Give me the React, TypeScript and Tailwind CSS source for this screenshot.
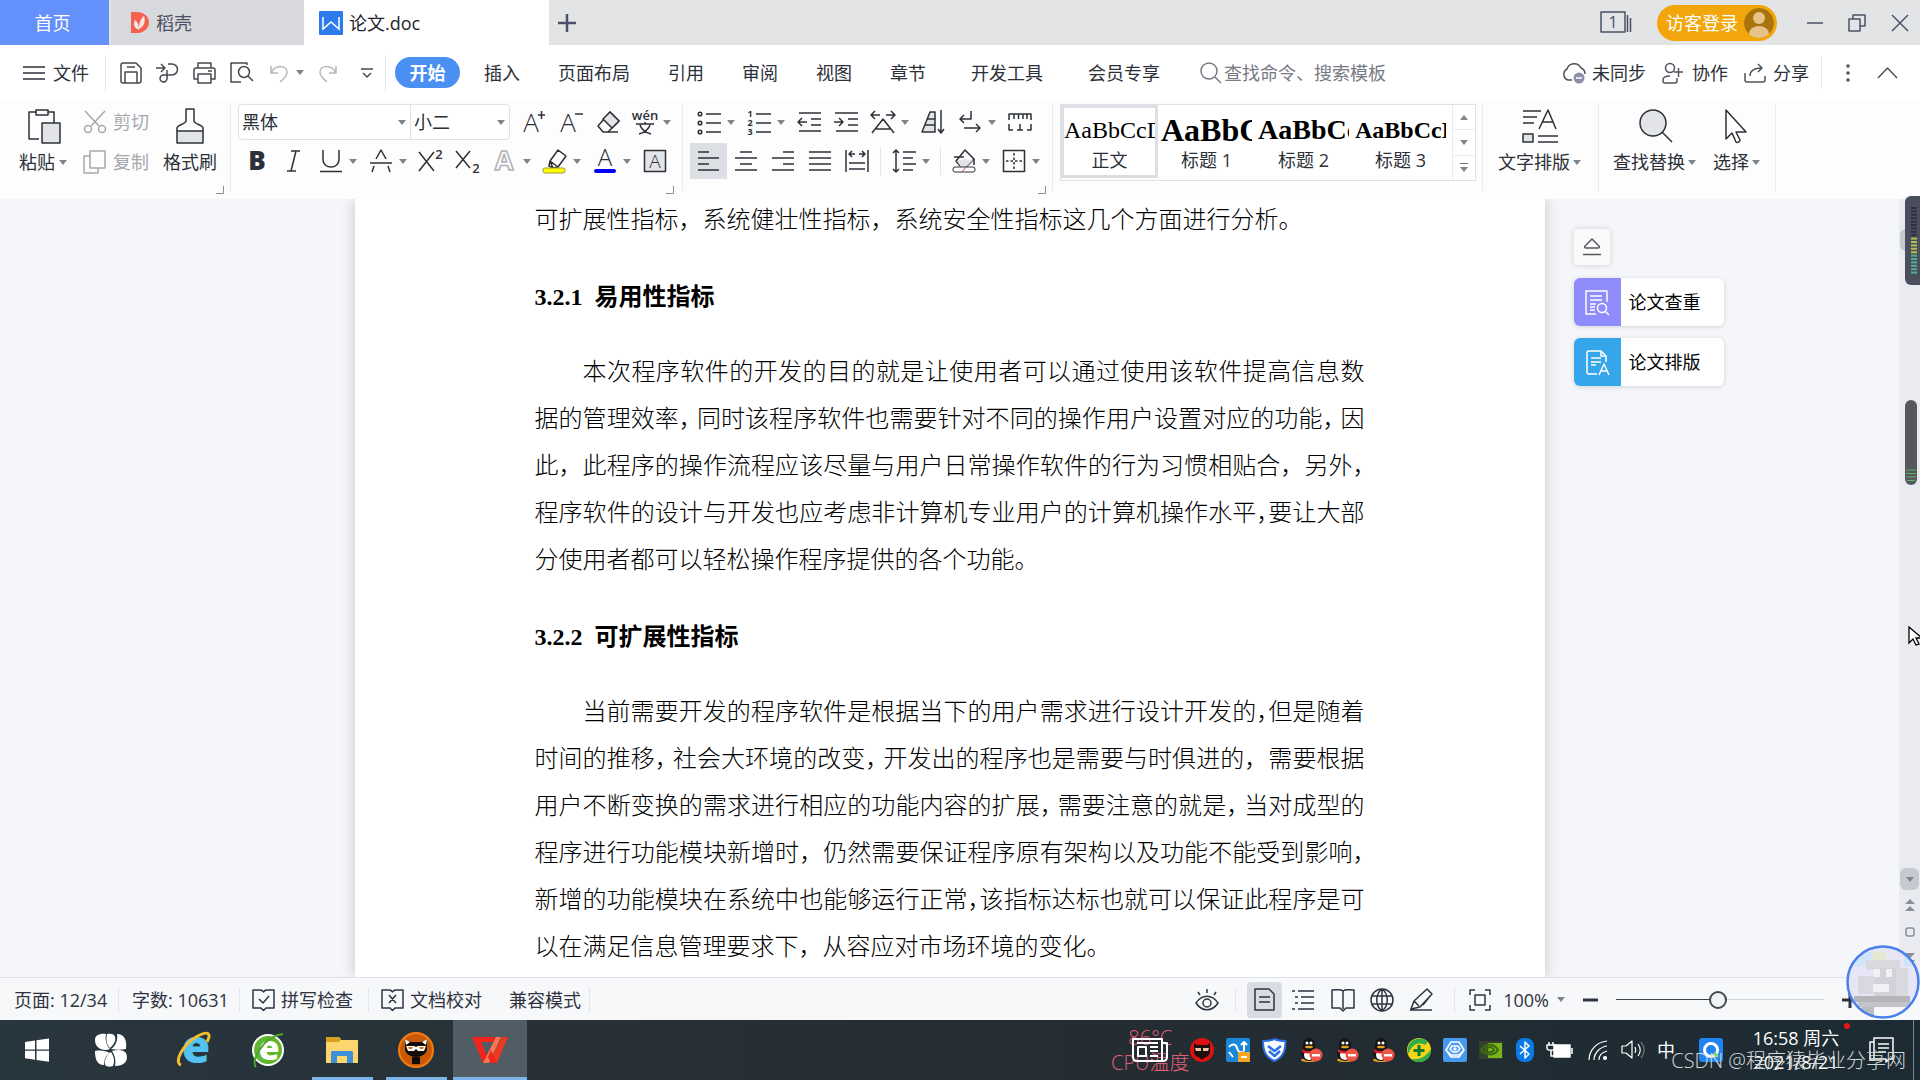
import type { ReactNode } from 'react'
import clsx from 'clsx'

type IconProps = {
  w?: number
  h?: number
  sw?: number
  className?: string
  children: ReactNode
}

function Icon({ w = 24, h = 24, sw = 1.5, className, children }: IconProps) {
  return (
    <svg
      width={w}
      height={h}
      viewBox={`0 0 ${w} ${h}`}
      fill="none"
      stroke="currentColor"
      strokeWidth={sw}
      strokeLinejoin="round"
      aria-hidden="true"
      className={clsx('shrink-0 overflow-visible', className)}
    >
      {children}
    </svg>
  )
}

type GlyphProps = {
  x: number
  y: number
  size: number
  weight?: number
  fill?: string
  stroke?: string
  children: ReactNode
}

// Letters inside toolbar icons
function Glyph({
  x,
  y,
  size,
  weight = 400,
  fill = 'currentColor',
  stroke = 'none',
  children,
}: GlyphProps) {
  return (
    <text
      x={x}
      y={y}
      fontSize={size}
      fontWeight={weight}
      textAnchor="middle"
      fill={fill}
      stroke={stroke}
    >
      {children}
    </text>
  )
}

function Arrow({ className }: { className?: string }) {
  return (
    <svg
      width="8"
      height="5"
      viewBox="0 0 8 5"
      className={clsx('shrink-0 fill-[#808389]', className)}
      aria-hidden="true"
    >
      <path d="M0 0h8L4 5z" />
    </svg>
  )
}

type ToolProps = {
  label: string
  menu?: boolean
  active?: boolean
  children: ReactNode
}

function Tool({ label, menu, active, children }: ToolProps) {
  return (
    <button type="button" aria-label={label} className="flex items-center">
      <span
        className={clsx(
          'flex h-9 w-[37px] items-center justify-center',
          active && 'bg-[#dcdfe3]'
        )}
      >
        {children}
      </span>
      {menu && <Arrow className="mr-[5px]" />}
    </button>
  )
}

function Divider({ className }: { className?: string }) {
  return <span className={clsx('w-px shrink-0 bg-[#e3e5e8]', className)} />
}

function Launcher() {
  return (
    <Icon w={8} h={8} sw={1} className="text-[#8b8e94]">
      <path d="M7.5 0v7.5H0" />
    </Icon>
  )
}

function TitleBar() {
  return (
    <header className="flex h-[45px] items-stretch bg-[#e2e4e6] text-lg">
      <button type="button" className="w-[109px] bg-[#6490fb] pr-1 text-white">
        首页
      </button>
      <button
        type="button"
        className="ml-[2px] flex w-[193px] items-center gap-[7px] bg-[#d7d9dd] pl-5 text-[#4d5163]"
      >
        <Icon w={18} h={21} sw={0}>
          <path d="M0 0h6a12 10.500 0 0 1 0 21H0z" fill="#f4614e" />
          <path
            d="M8 18C1 15 3 10 4 8c3 2 4 5 4 10zM8 17c0-7 2-11 5-13 2 5 0 11-5 13z"
            fill="#fbe3df"
          />
        </Icon>
        稻壳
      </button>
      <button
        type="button"
        className="flex w-[245px] items-center gap-[6px] bg-white pl-[15px] text-[#22252b]"
      >
        <Icon w={24} h={24}>
          <rect width="24" height="24" rx="1" fill="#2d7bea" stroke="none" />
          <path d="M4 6v12l8-7 8 7V6" stroke="#fff" strokeLinejoin="miter" />
        </Icon>
        论文.doc
      </button>
      <button
        type="button"
        aria-label="新建标签"
        className="flex w-9 items-center justify-center text-[#4b5068]"
      >
        <Icon w={18} h={18} sw={2.5}>
          <path d="M9 0v18M0 9h18" />
        </Icon>
      </button>
      <div className="ml-auto flex items-center text-[#4b5068]">
        <Icon w={32} h={24}>
          <path d="M1 1h24v20H1z" />
          <path d="M27.500 4v17M30.500 7v14" />
          <Glyph x={13} y={17} size={16}>
            1
          </Glyph>
        </Icon>
        <Divider className="mx-3 h-7 bg-[#cdcfd3]" />
        <button
          type="button"
          className="flex h-9 w-[120px] items-center justify-between rounded-full bg-[#f3a60b] pr-[3px] pl-[9px] text-white"
        >
          访客登录
          <Icon w={30} h={30} sw={0}>
            <clipPath id="face">
              <circle cx="15" cy="15" r="15" />
            </clipPath>
            <g clipPath="url(#face)">
              <circle cx="15" cy="15" r="15" fill="#a8740b" />
              <circle cx="15" cy="10" r="6" fill="#e7c38a" />
              <ellipse cx="15" cy="26" rx="10" ry="8" fill="#e7c38a" />
            </g>
          </Icon>
        </button>
        <Divider className="mx-3 h-7 bg-[#cdcfd3]" />
        <div className="flex items-center gap-6 pr-[11px] pl-[5px]">
          <button type="button" aria-label="最小化">
            <Icon w={16} h={18}>
              <path d="M0 9h16" />
            </Icon>
          </button>
          <button type="button" aria-label="还原">
            <Icon w={20} h={18}>
              <path d="M2 5h11v12H2zM6 5V1h12v11h-5" />
            </Icon>
          </button>
          <button type="button" aria-label="关闭">
            <Icon w={18} h={18}>
              <path d="m1 1 16 16M17 1 1 17" />
            </Icon>
          </button>
        </div>
      </div>
    </header>
  )
}

function QuickAccess() {
  return (
    <div className="flex items-center text-[#44484f]">
      <button type="button" aria-label="保存" className="ml-[14px]">
        <Icon w={22} h={22}>
          <path d="M3 1h13l5 5v13a2 2 0 0 1-2 2H3a2 2 0 0 1-2-2V3a2 2 0 0 1 2-2z" />
          <path d="M5 21V10h12v11M7 5h8" />
        </Icon>
      </button>
      <button type="button" aria-label="输出为PDF" className="ml-[14px]">
        <Icon w={23} h={22}>
          <path d="M0 6h9M5 2l4 4-4 4M12 2h4a5.500 5.500 0 0 1 0 11H8a3.500 3.500 0 1 0 3 4V8" />
        </Icon>
      </button>
      <button type="button" aria-label="打印" className="ml-[14px]">
        <Icon w={23} h={22}>
          <path d="M5 6V1h13v5M5 17H1V8a2 2 0 0 1 2-2h17a2 2 0 0 1 2 2v9h-4" />
          <path d="M5 12h13v9H5zM15 9h4" />
        </Icon>
      </button>
      <button type="button" aria-label="打印预览" className="ml-[14px]">
        <Icon w={24} h={22}>
          <path d="M17 3V1H1v19h10" />
          <circle cx="14" cy="10" r="5.500" />
          <path d="m18 14 5 5" />
        </Icon>
      </button>
      <button
        type="button"
        aria-label="撤销"
        className="ml-4 flex items-center gap-2 text-[#b5b8bd]"
      >
        <Icon w={18} h={20}>
          <path d="M1 3v7h7M1 10c4-9 16-8 16-1 0 5-4 7-7 10" />
        </Icon>
        <Arrow />
      </button>
      <button type="button" aria-label="恢复" className="ml-[15px] text-[#b5b8bd]">
        <Icon w={18} h={20}>
          <path d="M17 3v7h-7M17 10C13 1 1 2 1 9c0 5 4 7 7 10" />
        </Icon>
      </button>
      <button type="button" aria-label="自定义快速访问" className="mr-3 ml-6">
        <Icon w={12} h={10}>
          <path d="M0 1h12M2 5l4 4 4-4" />
        </Icon>
      </button>
    </div>
  )
}

const menuTabs = ['插入', '页面布局', '引用', '审阅', '视图', '章节']
const extraTabs = ['开发工具', '会员专享']

function MenuBar() {
  return (
    <nav className="flex h-[55px] items-center bg-white pl-[23px] text-lg text-[#2c3038]">
      <button type="button" className="flex items-center gap-2">
        <Icon w={22} h={14}>
          <path d="M0 1h22M0 7h22M0 13h22" />
        </Icon>
        文件
      </button>
      <Divider className="ml-4 h-9" />
      <QuickAccess />
      <Divider className="h-9" />
      <button
        type="button"
        className="ml-[9px] h-[31px] w-[65px] rounded-full bg-[#4a90f2] font-bold text-white"
      >
        开始
      </button>
      <div className="ml-6 flex gap-[38px]">
        {menuTabs.map((tab) => (
          <button key={tab} type="button">
            {tab}
          </button>
        ))}
      </div>
      {extraTabs.map((tab) => (
        <button key={tab} type="button" className="ml-[45px]">
          {tab}
        </button>
      ))}
      <label className="ml-10 flex items-center gap-[2px] text-[#767a82]">
        <Icon w={22} h={22}>
          <circle cx="9" cy="9" r="8" />
          <path d="m15 15 6 6" />
        </Icon>
        <input
          type="text"
          aria-label="查找"
          placeholder="查找命令、搜索模板"
          className="w-44 bg-transparent outline-none placeholder:text-[#767a82]"
        />
      </label>
      <div className="ml-auto flex items-center">
        <button type="button" className="flex items-center gap-[6px]">
          <Icon w={25} h={22} className="text-[#4f535c]">
            <path d="M11 18H7a6 6 0 0 1-1-11 7.500 7.500 0 0 1 14-1c3 1 4 3 4 6" />
            <circle cx="18" cy="16" r="5.500" fill="#8b90a8" stroke="none" />
            <path d="M15 16h6" stroke="#fff" />
          </Icon>
          未同步
        </button>
        <button type="button" className="ml-4 flex items-center gap-[9px]">
          <Icon w={21} h={22} className="text-[#4f535c]">
            <circle cx="8" cy="6" r="4.500" />
            <path d="M15 16v3a2 2 0 0 1-2 2H3a2 2 0 0 1-2-2v-1c0-3 3-4 7-4M12 10h9M16.500 6v9" />
          </Icon>
          协作
        </button>
        <button type="button" className="ml-4 flex items-center gap-[7px]">
          <Icon w={22} h={20} className="text-[#4f535c]">
            <path d="M1 10v7a2 2 0 0 0 2 2h16a2 2 0 0 0 2-2v-4M6 13c0-6 4-8 12-8M14 1l4 4-4 4" />
          </Icon>
          分享
        </button>
        <Divider className="ml-3 h-8" />
        <button type="button" aria-label="更多" className="ml-6 text-[#4f535c]">
          <Icon w={4} h={18} sw={0}>
            <g fill="currentColor">
              <circle cx="2" cy="2" r="1.800" />
              <circle cx="2" cy="9" r="1.800" />
              <circle cx="2" cy="16" r="1.800" />
            </g>
          </Icon>
        </button>
        <button
          type="button"
          aria-label="折叠功能区"
          className="mr-[22px] ml-[27px] text-[#4f535c]"
        >
          <Icon w={21} h={12}>
            <path d="m1 11 9.500-10L20 11" />
          </Icon>
        </button>
      </div>
    </nav>
  )
}

function ClipboardGroup() {
  return (
    <div className="flex w-[230px] shrink-0 items-start pl-[19px]">
      <button type="button" className="flex w-[49px] flex-col pt-1">
        <Icon w={34} h={38} className="ml-2">
          <path d="M12 31H2V4h7M21 4h6v11" />
          <path d="M9 2h12v5H9z" />
          <path d="M15 15h18v20H15z" fill="#e2e4e8" />
        </Icon>
        <span className="mt-1 flex items-center gap-1 whitespace-nowrap">
          粘贴
          <Arrow />
        </span>
      </button>
      <div className="ml-[15px] flex flex-col text-[#a5a8ad]">
        <button type="button" className="flex h-9 items-center gap-[6px]">
          <Icon w={24} h={24}>
            <circle cx="5" cy="19" r="3.500" />
            <circle cx="19" cy="19" r="3.500" />
            <path d="m2 1 14 15M22 1 8 16" />
          </Icon>
          剪切
        </button>
        <button type="button" className="mt-1 flex h-9 items-center gap-[6px]">
          <Icon w={24} h={24}>
            <path d="M7 1h15v17H7zM7 6H1v17h14v-5" />
          </Icon>
          复制
        </button>
      </div>
      <button type="button" className="ml-[14px] flex flex-col items-center pt-1">
        <Icon w={30} h={38}>
          <path d="M2 23h26v12H2z" fill="#e2e4e8" />
          <path d="M2 23v-3c0-3 9-4 9-7V1h8v12c0 3 9 4 9 7v3" />
        </Icon>
        <span className="mt-1">格式刷</span>
      </button>
      <span className="mt-[82px] -ml-px">
        <Launcher />
      </span>
    </div>
  )
}

function FontGroup() {
  return (
    <div className="flex w-[452px] shrink-0 flex-col gap-[3px] border-l border-[#e8eaec] pl-[7px]">
      <div className="flex items-center">
        <label className="flex h-9 w-[173px] items-center rounded-l border border-[#dfe1e4] bg-white">
          <select
            aria-label="字体"
            className="flex-1 appearance-none bg-transparent pl-[3px] outline-none"
          >
            <option>黑体</option>
          </select>
          <Arrow className="mr-1" />
        </label>
        <label className="-ml-px flex h-9 w-[100px] items-center rounded-r border border-[#dfe1e4] bg-white">
          <select
            aria-label="字号"
            className="flex-1 appearance-none bg-transparent pl-[3px] outline-none"
          >
            <option>小二</option>
          </select>
          <Arrow className="mr-1" />
        </label>
        <div className="ml-[5px] flex">
          <Tool label="增大字号">
            <Icon>
              <Glyph x={9} y={22} size={26} weight={300}>
                A
              </Glyph>
              <path d="M16 5h7M19.500 1v8" />
            </Icon>
          </Tool>
          <Tool label="减小字号">
            <Icon>
              <Glyph x={9} y={22} size={26} weight={300}>
                A
              </Glyph>
              <path d="M16 4h8" />
            </Icon>
          </Tool>
          <Tool label="清除格式">
            <Icon>
              <path d="M14 2 23 11 12 22H7l-5-6z" />
              <path d="M14 2 23 11l-7 7L7 9z" fill="#e2e4e8" />
              <path d="M12 22h10" />
            </Icon>
          </Tool>
          <Tool label="拼音指南" menu>
            <Icon>
              <Glyph x={12} y={10} size={13} weight={600}>
                wén
              </Glyph>
              <path d="M3 14h18M12 12v2M7 15c1 4 6 8 11 9M17 15c-1 4-6 8-11 9" />
            </Icon>
          </Tool>
        </div>
      </div>
      <div className="flex items-center">
        <Tool label="加粗">
          <Icon>
            <Glyph x={12} y={21} size={26} weight={800}>
              B
            </Glyph>
          </Icon>
        </Tool>
        <Tool label="倾斜">
          <Icon>
            <path d="M9 2h9M5 22h9M14 2 9 22" />
          </Icon>
        </Tool>
        <Tool label="下划线" menu>
          <Icon>
            <path d="M4 1v10a8 7 0 0 0 16 0V1M1 22.500h22" />
          </Icon>
        </Tool>
        <Tool label="删除线" menu>
          <Icon>
            <path d="M7 10l5-9 5 9M1 14h22M5 17l-2 6M19 17l2 6" />
          </Icon>
        </Tool>
        <Tool label="上标">
          <Icon w={26}>
            <path d="m1 3 15 19M16 3 1 22" />
            <Glyph x={21} y={10} size={13} weight={600}>
              2
            </Glyph>
          </Icon>
        </Tool>
        <Tool label="下标">
          <Icon w={26}>
            <path d="m1 2 14 17M15 2 1 19" />
            <Glyph x={21} y={24} size={13} weight={600}>
              2
            </Glyph>
          </Icon>
        </Tool>
        <Tool label="文字效果" menu>
          <Icon>
            <Glyph x={11} y={21} size={27} weight={700} fill="none" stroke="#aeb1b6">
              A
            </Glyph>
          </Icon>
        </Tool>
        <Tool label="突出显示" menu>
          <Icon w={26} h={26}>
            <path d="m8 13 8-11 8 6-8 11-5 1zM8 13l-1 5 4 2M8 13l8 6" />
            <rect x="1" y="20" width="22" height="5" rx="2" fill="#ff0" stroke="#9a9a3a" strokeWidth="1" />
          </Icon>
        </Tool>
        <Tool label="字体颜色" menu>
          <Icon h={26}>
            <Glyph x={12} y={18} size={24} weight={300}>
              A
            </Glyph>
            <rect x="1" y="21" width="22" height="4" rx="2" fill="#00f" stroke="none" />
          </Icon>
        </Tool>
        <Tool label="字符底纹">
          <Icon>
            <rect x="1.500" y="1.500" width="21" height="21" fill="#e2e4e8" />
            <Glyph x={12} y={19} size={19} weight={300}>
              A
            </Glyph>
          </Icon>
        </Tool>
      </div>
      <span className="mt-1 mr-2 self-end">
        <Launcher />
      </span>
    </div>
  )
}

const alignments = [
  { label: '左对齐', d: 'M1 3h11M1 9h21M1 15h11M1 21h21' },
  { label: '居中对齐', d: 'M6 3h12M1 9h22M6 15h12M1 21h22' },
  { label: '右对齐', d: 'M12 3h11M1 9h22M12 15h11M1 21h22' },
  { label: '两端对齐', d: 'M1 3h22M1 9h22M1 15h22M1 21h22' },
  {
    label: '分散对齐',
    d: 'M1 1v22M23 1v22M4 5h6M14 5h6M7 2 4 5l3 3M17 2l3 3-3 3M4 14h16M4 20h16',
  },
]

function ParagraphGroup() {
  return (
    <div className="flex w-[370px] shrink-0 flex-col gap-[3px] border-l border-[#e8eaec] pl-[7px]">
      <div className="flex">
        <Tool label="项目符号" menu>
          <Icon>
            <path d="M9 4h15M9 13h15M9 22h15" />
            <circle cx="3" cy="4" r="1.800" />
            <circle cx="3" cy="13" r="1.800" />
            <circle cx="3" cy="22" r="1.800" />
          </Icon>
        </Tool>
        <Tool label="编号" menu>
          <Icon>
            <path d="M9 4h15M9 13h15M9 22h15" />
            <Glyph x={3} y={7} size={9} weight={700}>
              1
            </Glyph>
            <Glyph x={3} y={16} size={9} weight={700}>
              2
            </Glyph>
            <Glyph x={3} y={25} size={9} weight={700}>
              3
            </Glyph>
          </Icon>
        </Tool>
        <Tool label="减少缩进量">
          <Icon>
            <path d="M2 3h22M14 9h10M14 15h10M2 21h22M1 12h9M5 8l-4 4 4 4" />
          </Icon>
        </Tool>
        <Tool label="增加缩进量">
          <Icon>
            <path d="M1 3h23M14 9h10M14 15h10M2 21h22M0 12h9M5 8l4 4-4 4" />
          </Icon>
        </Tool>
        <Tool label="中文版式" menu>
          <Icon>
            <path d="M0 5h9M15 5h9M4 1 0 5l4 4M20 1l4 4-4 4M1 23 12 9l11 14M5 19h14" />
          </Icon>
        </Tool>
        <Tool label="排序">
          <Icon>
            <path d="M1 22 9 2h5v20zM6 9h8M4 15h10" fill="#e2e4e8" />
            <path d="M20 0v23M17 19l3 4 3-4" />
          </Icon>
        </Tool>
        <Tool label="显示段落标记" menu>
          <Icon>
            <path d="M13 1v8H2M6 5 2 9l4 4M6 18h16M18 14l4 4-4 4" />
          </Icon>
        </Tool>
        <Tool label="制表位">
          <Icon>
            <path d="M1 10V4h22v6M6 4v5M10.500 4v5M15 4v5M19 4v5M1 14v6h4M9 20h6M12 14v6M19 20h4v-6" />
          </Icon>
        </Tool>
      </div>
      <div className="flex items-center">
        {alignments.map(({ label, d }, i) => (
          <Tool key={label} label={label} active={i === 0}>
            <Icon>
              <path d={d} />
            </Icon>
          </Tool>
        ))}
        <Divider className="mr-1 ml-[5px] h-7" />
        <Tool label="行距" menu>
          <Icon>
            <path d="M4 1v22M1 4l3-3 3 3M1 20l3 3 3-3M11 3h13M11 9h10M11 15h13M11 21h10" />
          </Icon>
        </Tool>
        <Divider className="mr-1 ml-[5px] h-7" />
        <Tool label="底纹颜色" menu>
          <Icon>
            <path d="m13 1 9 9-8 8H9L4 12z" />
            <path d="m5 12 8-2 8 1-7 7H9z" fill="#e2e4e8" stroke="none" />
            <path d="M2 8h10M22 10v6" />
            <rect x="1" y="18" width="22" height="5" rx="2" fill="#fff" strokeWidth="1" />
            <path d="m10 23 4-5" stroke="#d44" strokeWidth="1" />
          </Icon>
        </Tool>
        <Tool label="边框" menu>
          <Icon>
            <rect x="1.500" y="1.500" width="21" height="21" />
            <path d="M4 12h16M12 4v16" strokeDasharray="2.500 2" />
          </Icon>
        </Tool>
      </div>
      <span className="mt-1 mr-[6px] self-end">
        <Launcher />
      </span>
    </div>
  )
}

const styles = [
  { name: '正文', sample: 'text-[24px]' },
  { name: '标题 1', sample: 'text-[32px] font-bold' },
  { name: '标题 2', sample: 'text-[28px] font-bold' },
  { name: '标题 3', sample: 'text-[24px] font-bold' },
]

function StyleGallery() {
  return (
    <div className="flex w-[430px] shrink-0 items-start border-l border-[#e8eaec] pl-[7px]">
      <div className="flex h-[77px] w-[416px] border border-[#dfe1e4] bg-white">
        {styles.map(({ name, sample }, i) => (
          <button
            key={name}
            type="button"
            className={clsx(
              'flex h-[73px] w-[97px] flex-col items-center border-[3px] pt-1 text-[#2c3038]',
              i === 0 ? 'border-[#dcdfe3]' : 'border-transparent'
            )}
          >
            <span
              className={clsx(
                "h-9 w-[91px] overflow-hidden text-left font-['Liberation_Serif',serif] leading-9 whitespace-nowrap text-black",
                sample
              )}
            >
              AaBbCcDd
            </span>
            <span className="leading-6">{name}</span>
          </button>
        ))}
        <div className="ml-auto flex w-[23px] flex-col divide-y divide-[#e8eaec] border-l border-[#e8eaec]">
          <button type="button" aria-label="上一行" className="flex flex-1 items-center justify-center">
            <Arrow className="rotate-180" />
          </button>
          <button type="button" aria-label="下一行" className="flex flex-1 items-center justify-center">
            <Arrow />
          </button>
          <button
            type="button"
            aria-label="更多样式"
            className="flex flex-1 flex-col items-center justify-center gap-[3px]"
          >
            <span className="h-px w-2 bg-[#6d7077]" />
            <Arrow />
          </button>
        </div>
      </div>
    </div>
  )
}

type BigToolProps = { label: string; children: ReactNode }

function BigTool({ label, children }: BigToolProps) {
  return (
    <button type="button" className="flex flex-col items-center pt-1">
      <span className="flex h-[38px]">{children}</span>
      <span className="mt-1 flex items-center gap-[3px] whitespace-nowrap">
        {label}
        <Arrow />
      </span>
    </button>
  )
}

function Ribbon() {
  return (
    <section className="flex h-[99px] bg-[#fdfdfd] pt-1 pb-2 text-lg leading-6 text-[#2c3038] shadow-[0_1px_2px_rgba(0,0,0,0.12)]">
      <ClipboardGroup />
      <FontGroup />
      <ParagraphGroup />
      <StyleGallery />
      <div className="flex w-[116px] shrink-0 items-start border-l border-[#e8eaec] pl-[15px]">
        <BigTool label="文字排版">
          <Icon w={36} h={36}>
            <path d="M1 3h18M1 9h14M1 15h11M16 28h20M16 34h20" />
            <path d="M1 26h10v8H1z" fill="#e2e4e8" />
            <path d="M17 21 26 2l8 19M20 14h11" />
          </Icon>
        </BigTool>
      </div>
      <div className="flex w-[178px] shrink-0 items-start gap-[17px] border-r border-l border-[#e8eaec] pl-[14px]">
        <BigTool label="查找替换">
          <Icon w={36} h={36}>
            <circle cx="16" cy="15" r="13" fill="#e2e4e8" />
            <path d="m25 24 10 10" />
          </Icon>
        </BigTool>
        <BigTool label="选择">
          <Icon w={26} h={36}>
            <path d="M2 2v29l6-6 4 9c1 1 4 0 4-2l-4-8h10z" fill="#fff" />
          </Icon>
        </BigTool>
      </div>
    </section>
  )
}

// Comma trimmed by the word processor to keep a line justified
function C({ tight }: { tight?: boolean }) {
  return (
    <span
      className={clsx(
        'inline-block [font-feature-settings:"halt"]',
        tight ? 'w-3' : 'w-[18px]'
      )}
    >
      ，
    </span>
  )
}

type LineProps = { indent?: boolean; last?: boolean; children: ReactNode }

function Line({ indent, last, children }: LineProps) {
  return (
    <span
      className={clsx(
        'block h-[47px] whitespace-nowrap',
        indent && 'pl-12',
        !last && '[text-align-last:justify]'
      )}
    >
      {children}
    </span>
  )
}

function Page() {
  return (
    <article className="w-full max-w-[1190px] shrink-0 bg-white px-[180px] font-['Liberation_Serif','Noto_Sans_CJK_SC',serif] text-2xl leading-[47px] font-light text-black shadow-[0_0_14px_rgba(0,0,0,0.2)]">
      <p className="leading-[42px]">
        可扩展性指标，系统健壮性指标，系统安全性指标这几个方面进行分析。
      </p>
      <h2 className="mt-[33px] font-bold">3.2.1&ensp;易用性指标</h2>
      <p className="mt-7">
        <Line indent>本次程序软件的开发的目的就是让使用者可以通过使用该软件提高信息数</Line>
        <Line>
          据的管理效率
          <C />
          同时该程序软件也需要针对不同的操作用户设置对应的功能
          <C />因
        </Line>
        <Line>
          此，此程序的操作流程应该尽量与用户日常操作软件的行为习惯相贴合，另外
          <C tight />
        </Line>
        <Line>
          程序软件的设计与开发也应考虑非计算机专业用户的计算机操作水平
          <C tight />
          要让大部
        </Line>
        <Line last>分使用者都可以轻松操作程序提供的各个功能。</Line>
      </p>
      <h2 className="mt-[30px] font-bold">3.2.2&ensp;可扩展性指标</h2>
      <p className="mt-7">
        <Line indent>
          当前需要开发的程序软件是根据当下的用户需求进行设计开发的
          <C tight />
          但是随着
        </Line>
        <Line>
          时间的推移
          <C />
          社会大环境的改变
          <C />
          开发出的程序也是需要与时俱进的，需要根据
        </Line>
        <Line>
          用户不断变换的需求进行相应的功能内容的扩展
          <C />
          需要注意的就是
          <C />
          当对成型的
        </Line>
        <Line>
          程序进行功能模块新增时，仍然需要保证程序原有架构以及功能不能受到影响
          <C tight />
        </Line>
        <Line>
          新增的功能模块在系统中也能够运行正常
          <C tight />
          该指标达标也就可以保证此程序是可
        </Line>
        <Line last>以在满足信息管理要求下，从容应对市场环境的变化。</Line>
      </p>
    </article>
  )
}

function SideTools() {
  return (
    <aside className="min-w-0 flex-1 text-lg text-black">
      <div className="flex flex-col items-start pt-[30px] pl-[29px]">
        <button
          type="button"
          aria-label="收起"
          className="flex size-9 items-center justify-center rounded-sm bg-[#fafafa] text-[#55585e] shadow-[0_0_6px_rgba(0,0,0,0.15)]"
        >
          <Icon w={18} h={18}>
            <path d="m9 1 7 7c1 1 0 2-1 2H3c-1 0-2-1-1-2zM0 16.500h18" />
          </Icon>
        </button>
        <button
          type="button"
          className="mt-[13px] flex h-12 w-[150px] items-center overflow-hidden rounded-md bg-white shadow-[0_1px_5px_rgba(0,0,0,0.14)]"
        >
          <span className="flex h-full w-[47px] items-center justify-center bg-[#8e8bfb] text-white">
            <Icon w={25} h={25}>
              <path d="M11 24H1V1h21v11M5 6h12M5 10h12M5 14h6M5 17h5M5 20h5" />
              <circle cx="17" cy="18" r="4.500" />
              <path d="m20 21 4 4" />
            </Icon>
          </span>
          <span className="ml-2">论文查重</span>
        </button>
        <button
          type="button"
          className="mt-3 flex h-12 w-[150px] items-center overflow-hidden rounded-md bg-white shadow-[0_1px_5px_rgba(0,0,0,0.14)]"
        >
          <span className="flex h-full w-[47px] items-center justify-center bg-[#35a6ea] text-white">
            <Icon w={25} h={25}>
              <path d="M12 24H4a2 2 0 0 1-2-2V3a2 2 0 0 1 2-2h12l5 5v6M16 1v5h5M6 8h10M6 12h10M6 15h5" />
              <path d="m14 25 5-11 5 11M16 21h6" />
            </Icon>
          </span>
          <span className="ml-2">论文排版</span>
        </button>
      </div>
    </aside>
  )
}

function ScrollBar() {
  return (
    <div className="flex w-[21px] shrink-0 flex-col items-center bg-[#e9ebf0] pt-[30px] text-[#8a8d9c]">
      <button
        type="button"
        aria-label="向上滚动"
        className="h-[22px] w-[19px] rounded-md bg-[#c6c9cf]"
      />
      <button
        type="button"
        aria-label="向下滚动"
        className="mt-auto flex h-[22px] w-[19px] items-center justify-center rounded-md bg-[#c6c9cf]"
      >
        <Arrow />
      </button>
      <button type="button" aria-label="上一页" className="mt-[9px]">
        <Icon w={10} h={12} sw={0}>
          <path d="M0 5 5 0l5 5zM0 12l5-5 5 5z" fill="currentColor" />
        </Icon>
      </button>
      <button type="button" aria-label="选择浏览对象" className="mt-4">
        <Icon w={10} h={10}>
          <rect x="1" y="1" width="8" height="8" rx="2" />
        </Icon>
      </button>
      <button type="button" aria-label="下一页" className="mt-4 mb-3">
        <Icon w={10} h={12} sw={0}>
          <path d="M0 0h10L5 5zM0 7h10l-5 5z" fill="currentColor" />
        </Icon>
      </button>
    </div>
  )
}

const meterRows = Array.from({ length: 20 }, (_, i) => i)

function Overlays() {
  return (
    <>
      <svg width="15" height="90" className="absolute top-[196px] right-0" aria-hidden="true">
        <path d="M15 0H6a6 6 0 0 0-6 6v77a6 6 0 0 0 6 6h9z" fill="#4b4f5d" />
        {meterRows.map((i) => (
          <rect
            key={i}
            x="6"
            y={11 + i * 3.4}
            width="6"
            height="2"
            fill={i < 9 ? '#2e3140' : i < 14 ? '#b3c04c' : '#4fae8b'}
          />
        ))}
      </svg>
      <svg width="12" height="85" className="absolute top-[400px] right-[3px]" aria-hidden="true">
        <rect width="12" height="85" rx="6" fill="#56585b" />
        <path d="M1 70h10M1 73.500h10M1 77h10M2 80.500h8" stroke="#58b56a" />
      </svg>
      <svg width="12" height="20" className="absolute top-[626px] right-0" aria-hidden="true">
        <path d="M1 1v16l4-4 3 6 3-1-3-6h6z" fill="#fff" stroke="#000" strokeWidth="1.300" />
      </svg>
      <svg
        width="74"
        height="76"
        viewBox="0 0 74 76"
        className="absolute right-0 bottom-[60px]"
        aria-hidden="true"
      >
        <clipPath id="ball">
          <circle cx="37" cy="38" r="35" />
        </clipPath>
        <g clipPath="url(#ball)">
          <path fill="#e6e6f6" d="M0 0h74v76H0z" />
          <path fill="#cfe4f8" d="M8 8h18v14H8zM58 6h12v16H58z" />
          <path fill="#d8d9de" d="M20 16h34v10H20zM12 32h18v18H12zM46 24h16v28H46z" />
          <path fill="#e2e8d2" d="M26 8h14v8H26z" />
          <path fill="#d3d1da" d="M28 24h22v30H28z" />
          <path fill="#f2f2f5" d="M28 25h6v8h-6zM40 25h6v8h-6zM27 40h16v8H27z" />
          <path fill="#b4b4b9" d="M8 52h56v6H8z" />
          <path fill="#c4c2ca" d="M12 58h52v5H12z" />
          <path fill="#f8f8fb" d="M28 63h40v12H28z" />
          <path fill="#b9bcc0" d="M16 63h12v8H16z" />
        </g>
        <circle cx="37" cy="38" r="35.500" fill="none" stroke="#4a80ea" strokeWidth="2.500" />
      </svg>
    </>
  )
}

const viewModes = [
  {
    label: '页面视图',
    d: 'M2 1h14l5 5v16H2zM6 9h11M6 14h11',
  },
  {
    label: '大纲',
    d: 'M0 3h3M6 3h16M3 9h3M9 9h13M3 15h3M9 15h13M0 21h3M6 21h16',
  },
  {
    label: '阅读版式',
    d: 'M12 3c-2-2-4-1-11-1v18h8l3 3 3-3h8V2c-7 0-9-1-11 1zv18',
  },
  {
    label: 'Web版式',
    d: 'M12 1a11 11 0 1 0 0 22 11 11 0 1 0 0-22M12 1c-7 5-7 17 0 22 7-5 7-17 0-22M2 8h20M2 16h20M12 1v22',
  },
  {
    label: '写作模式',
    d: 'M1 22h22M2 21l3-8L18 1l5 5L11 19l-9 2zM5 13l5 5M21 8l-7 9',
  },
]

function StatusBar() {
  return (
    <footer className="flex h-[43px] shrink-0 items-center border-t border-[#dfe1e6] bg-[#f6f8fa] pt-px pl-[14px] text-lg text-[#2f3340]">
      <span className="w-[104px]">页面: 12/34</span>
      <Divider className="h-6" />
      <span className="w-[120px] pl-[13px]">字数: 10631</span>
      <Divider className="h-6" />
      <button type="button" className="flex w-[128px] items-center gap-[6px] pl-3">
        <Icon w={23} h={22}>
          <path d="M1 1h7c2 0 3 1 3.500 2C12 2 13 1 15 1h7v18h-8l-2.500 2.500L9 19H1zM7 10l4 4 6-7" />
        </Icon>
        拼写检查
      </button>
      <Divider className="h-6" />
      <button type="button" className="flex w-[128px] items-center gap-[6px] pl-3">
        <Icon w={23} h={22}>
          <path d="M1 1h7c2 0 3 1 3.500 2C12 2 13 1 15 1h7v18h-8l-2.500 2.500L9 19H1zM8 6l7 8M15 6l-7 8" />
        </Icon>
        文档校对
      </button>
      <span className="ml-3 w-20">兼容模式</span>
      <Divider className="h-6" />
      <div className="ml-auto flex items-center">
        <button type="button" aria-label="护眼模式">
          <Icon w={24} h={24}>
            <path d="M1 15c6-9 16-9 22 0-6 9-16 9-22 0zM12 1v4M3 4l2 3M21 4l-2 3" />
            <circle cx="12" cy="15" r="4" />
          </Icon>
        </button>
        <Divider className="mr-[11px] ml-4 h-6" />
        {viewModes.map(({ label, d }, i) => (
          <button
            key={label}
            type="button"
            aria-label={label}
            className={clsx(
              'mr-1 flex h-9 w-[35px] items-center justify-center rounded-sm',
              i === 0 && 'bg-[#d9dde3]'
            )}
          >
            <Icon>
              <path d={d} />
            </Icon>
          </button>
        ))}
        <Divider className="mr-[14px] ml-3 h-6" />
        <button type="button" aria-label="最佳显示比例">
          <Icon w={22} h={22}>
            <path d="M1 6V1h5M16 1h5v5M21 16v5h-5M6 21H1v-5M6 6h10v10H6z" />
          </Icon>
        </button>
        <button type="button" className="ml-3 flex items-center gap-2">
          100%
          <Arrow />
        </button>
        <button type="button" aria-label="缩小" className="ml-[18px]">
          <Icon w={15} h={18} sw={3}>
            <path d="M0 9h15" />
          </Icon>
        </button>
        <input
          type="range"
          aria-label="显示比例"
          defaultValue={49}
          className="mx-[18px] h-[18px] w-[208px] appearance-none bg-[linear-gradient(to_right,#3c404a_50%,#cfd2d8_50%)] bg-[length:100%_1px] bg-center bg-no-repeat [&::-webkit-slider-thumb]:size-[18px] [&::-webkit-slider-thumb]:appearance-none [&::-webkit-slider-thumb]:rounded-full [&::-webkit-slider-thumb]:border-2 [&::-webkit-slider-thumb]:border-[#44474e] [&::-webkit-slider-thumb]:bg-[#f1f2f4]"
        />
        <button type="button" aria-label="放大" className="mr-[62px]">
          <Icon w={16} h={18} sw={3}>
            <path d="M0 9h16M8 1v16" />
          </Icon>
        </button>
      </div>
    </footer>
  )
}

type TaskProps = { label: string; state?: 'open' | 'focused'; children: ReactNode }

function Task({ label, state, children }: TaskProps) {
  return (
    <button
      type="button"
      aria-label={label}
      className={clsx(
        'flex h-full w-[74px] flex-col items-center justify-between',
        state === 'focused' && 'bg-[#525c64]'
      )}
    >
      <span className="flex flex-1 items-center pt-[3px]">{children}</span>
      <span
        className={clsx(
          'h-[3px]',
          state === 'focused' && 'w-full bg-[#7db5ea]',
          state === 'open' && 'w-[61px] bg-[#7db5ea]'
        )}
      />
    </button>
  )
}

function QQ() {
  return (
    <Icon w={24} h={24} sw={0}>
      <ellipse cx="10" cy="22" rx="8" ry="2" fill="#e9a01c" />
      <ellipse cx="10" cy="15" rx="8" ry="8" fill="#161616" />
      <ellipse cx="10" cy="17" rx="5" ry="5" fill="#fff" />
      <ellipse cx="10" cy="7" rx="6" ry="7" fill="#161616" />
      <circle cx="8" cy="5" r="1.500" fill="#fff" />
      <circle cx="12" cy="5" r="1.500" fill="#fff" />
      <ellipse cx="10" cy="9" rx="4" ry="1.300" fill="#e9a01c" />
      <path d="M3 11c5 3 9 3 14 0v3c-5 2-9 2-14 0z" fill="#d8232a" />
      <circle cx="17" cy="17" r="6.500" fill="#ef5547" />
      <path d="M13 16h8v2.500h-8z" fill="#fff" />
    </Icon>
  )
}

function TrayIcons() {
  return (
    <div className="flex items-center text-white">
      <div className="grid w-[72px] place-items-center">
        <div className="col-start-1 row-start-1 text-center text-xl leading-[25px] font-light whitespace-nowrap text-[#e0607a]">
          86°C
          <br />
          CPU温度
        </div>
        <Icon w={36} h={25} sw={2} className="col-start-1 row-start-1">
          <path d="M1 1h29v22H5c-3 0-4-1-4-4zM30 5h5v14c0 3-1 4-4 4h-3M6 9h8v9H6zM5 5h21M18 9h8M18 13h8M18 18h8" />
        </Icon>
      </div>
      <div className="ml-[7px] flex items-center gap-3">
        <Icon w={24} h={24} sw={0}>
          <circle cx="12" cy="12" r="12" fill="#dc1212" />
          <path d="m4 5 3 2h10l3-2v9a8 6 0 0 1-16 0z" fill="#1c1010" />
          <path d="M5 10h6v3H6zM13 10h6l-1 3h-5z" fill="#f3c7a4" />
          <path d="M10 17h4v4h-4z" fill="#1c1010" />
        </Icon>
        <Icon w={24} h={24} sw={2}>
          <rect width="24" height="24" rx="2" fill="#1b87d8" stroke="none" />
          <path d="M3 9c3-4 7-3 8 1s3 5 7 4M18 13V4M15 7l3-3 3 3M3 14l4 5" stroke="#fff" />
          <path d="M12 14h12v10H12z" fill="#f5a623" stroke="none" />
          <path d="M15 19h6" stroke="#fff" />
        </Icon>
        <Icon w={25} h={24} sw={2}>
          <path d="M12.500 1c4 2 7 2 11 2 0 9-2 16-11 20C3 19 1 12 1 3c5 0 8 0 11.500-2z" fill="#fff" stroke="#2a6fe6" />
          <path d="m6 8 6.500 5L19 8M7 13l5.500 5 5.500-5" stroke="#2a6fe6" strokeWidth="2.500" />
        </Icon>
        <QQ />
        <QQ />
        <QQ />
        <Icon w={24} h={24} sw={0}>
          <circle cx="12" cy="12" r="12" fill="#f7d417" />
          <path d="M1 16A12 12 0 0 1 21 4l-3 3C9 3 5 8 1 16z" fill="#2fae47" />
          <path d="M24 11A12 12 0 0 1 4 21c8 1 14-1 20-10z" fill="#2fae47" />
          <path d="M10.500 7h3v4h4v3h-4v4h-3v-4h-4v-3h4z" fill="#0d7c33" />
        </Icon>
        <Icon w={24} h={24}>
          <rect width="24" height="24" rx="2" fill="#4699ee" stroke="none" />
          <path d="m8 4-5 8 5 7h8l5-7-5-8zM3 12l5 5h8l5-5M9 8l-2 3 3 3h4l3-3-2-3z" />
          <circle cx="12" cy="11" r="1" />
        </Icon>
        <Icon w={24} h={24} sw={1}>
          <path d="M0 3h24v18H0z" fill="#34402c" stroke="none" />
          <path d="M9 5h14v15H9z" fill="#77b41c" stroke="none" />
          <path d="M2 12c5-7 13-7 17 0-4 6-12 6-17 0zM6 12c3-4 7-4 9 0-2 3-6 3-9 0z" stroke="#3c6a10" strokeWidth="2" />
        </Icon>
        <Icon w={20} h={24}>
          <rect x="1" width="18" height="24" rx="8" fill="#0a7be6" stroke="none" />
          <path d="m5 8 9 8-4 4V4l4 4-9 8" />
        </Icon>
        <Icon w={26} h={24}>
          <path d="M7 7h16v12H7z" fill="#fff" />
          <path d="M25 10v6M2 4v3M6 4v3M0 7h8v3c0 3-8 3-8 0zM4 12v6h3" />
        </Icon>
        <Icon w={22} h={22} sw={1.2} className="ml-[2px]">
          <path d="M2 21C2 11 10 3 20 2M7 21c0-7 6-13 13-14M12 21c0-5 4-8 8-9" />
          <circle cx="18" cy="19" r="1.500" fill="#fff" />
        </Icon>
        <Icon w={24} h={22} sw={1.2}>
          <path d="M1 7h4l6-5v17l-6-5H1zM14 8c1 2 1 4 0 6M17 5c3 4 3 8 0 12" />
          <path d="M20 3c4 5 4 11 0 16" stroke="#707a82" />
        </Icon>
        <span className="text-lg">中</span>
        <Icon w={24} h={24} sw={3} className="ml-3">
          <rect width="24" height="24" rx="3" fill="#1f83f5" stroke="none" />
          <circle cx="12" cy="12" r="6.500" />
          <path d="m15 15 4 4" stroke="#7fd36c" />
        </Icon>
      </div>
    </div>
  )
}

function TaskBar() {
  return (
    <footer className="relative flex h-[60px] shrink-0 items-center justify-between bg-linear-to-r from-[#28363e] via-[#262d32] to-[#1c2b33]">
      <div className="flex h-full items-center">
        <Task label="开始菜单">
          <Icon w={24} h={24} sw={0}>
            <path d="M0 4 10 2.500v9H0zM11.500 2.300 24 .5v11H11.500zM0 12.800h10v9L0 20.300zM11.500 12.800H24v11L11.500 22z" fill="#fff" />
          </Icon>
        </Task>
        <Task label="浏览器">
          <Icon w={34} h={34} sw={0}>
            <path d="M1 7C1 2 6 0 12 1c-1 5 0 11 4 15C9 19 1 15 1 7zM13 1c8-1 9 3 8 7-1 3-3 5-5 7-4-4-4-9-3-14zM23 1c8 0 10 7 9 15-5 1-10 1-15 0 5-3 7-10 6-15zM1 18c6-1 11 0 15 2-4 2-6 6-6 12-7 0-9-6-9-14zM11 32c-1-6 2-10 6-13 3 5 4 9 2 14-3 1-6 1-8-1zM18 18c6-2 12-1 14 2 3 7-1 13-11 13 1-6 0-10-3-15z" fill="#fff" />
          </Icon>
        </Task>
        <span className="ml-[9px] flex h-full">
          <Task label="Internet Explorer">
            <Icon w={36} h={36}>
              <Glyph x={20} y={31} size={46} weight={800} fill="#55c3f2">
                e
              </Glyph>
              <path d="M5 33C-3 30 8 12 20 5s16-4 11 5" stroke="#f4bd2b" strokeWidth="3" />
            </Icon>
          </Task>
          <Task label="360浏览器">
            <Icon w={34} h={36}>
              <circle cx="17" cy="18" r="15" fill="#62b62f" stroke="#fff" strokeWidth="2" />
              <Glyph x={18} y={28} size={34} weight={800} fill="#fff">
                e
              </Glyph>
              <path d="M5 35C-1 30 12 4 32 2" stroke="#4fa52a" strokeWidth="2" />
            </Icon>
          </Task>
          <Task label="文件资源管理器" state="open">
            <Icon w={34} h={28} sw={0}>
              <path d="M1 1h13l2 3h17v23H1z" fill="#fbd66f" />
              <path d="M1 1h13l2 2-2 3H1z" fill="#d99f1e" />
              <path d="M6 27V17c0-2 1-2 2-2h18c1 0 2 0 2 2v10h-6v-7H12v7z" fill="#3c8fd8" />
            </Icon>
          </Task>
          <Task label="录屏" state="open">
            <Icon w={36} h={36} sw={0}>
              <circle cx="18" cy="18" r="17" fill="#c95a05" stroke="#f27c14" strokeWidth="2" />
              <path d="m7 7 6 3h10l6-3v10a11 8 0 0 1-22 0z" fill="#120d0a" />
              <path d="m7 7 5 3-4 3zM29 7l-5 3 4 3z" fill="#fff" />
              <path d="M8 14h8l2 1 2-1h8l-2 5h-6l-2-2-2 2h-6z" fill="#fff" />
              <path d="M10 15h5l-1 2h-3zM21 15h5l-1 2h-3z" fill="#e8731a" />
              <path d="M14 25h8v7h-8z" fill="#120d0a" />
            </Icon>
          </Task>
          <Task label="WPS Office" state="focused">
            <Icon w={36} h={28} sw={0}>
              <path d="M0 1h24l-3 5H9l6 14-4 7z" fill="#f0251b" />
              <path d="M24 1h5L17 27h-6z" fill="#ff7351" />
              <path d="M30 1h6L25 27h-6l1-6z" fill="#e83a20" />
              <path d="M19 14l6 13h-6l-3-6z" fill="#f0251b" />
            </Icon>
          </Task>
        </span>
      </div>
      <div className="flex h-full items-center">
        <TrayIcons />
        <time className="ml-6 w-[98px] text-center text-lg leading-6 whitespace-nowrap text-white">
          16:58 周六
          <br />
          2021/8/21
        </time>
        <Icon w={26} h={26} className="ml-6 text-white">
          <path d="M5 1h19v21h-4l-3 3v-3H5zM5 5H1v18h4M9 7h11M9 11h11M9 15h8" />
        </Icon>
        <span className="mr-[6px] ml-[18px] h-full w-px bg-[#7a848b]" />
      </div>
      <span className="absolute top-[3px] right-[70px] size-[6px] rounded-full bg-[#e81515]" />
      <span className="absolute right-[14px] bottom-1 text-xl leading-[30px] font-light whitespace-nowrap text-[#d4d7d9]">
        CSDN @程序猿毕业分享网
      </span>
    </footer>
  )
}

export default function App() {
  return (
    <div className="relative flex h-screen flex-col overflow-hidden font-['Open_Sans','Noto_Sans_CJK_SC',sans-serif]">
      <TitleBar />
      <MenuBar />
      <Ribbon />
      <main className="flex min-h-0 flex-1 overflow-hidden bg-[#f4f6f9]">
        <div className="flex flex-1">
          <div className="flex-1" />
          <Page />
          <SideTools />
        </div>
        <ScrollBar />
      </main>
      <StatusBar />
      <TaskBar />
      <Overlays />
    </div>
  )
}
